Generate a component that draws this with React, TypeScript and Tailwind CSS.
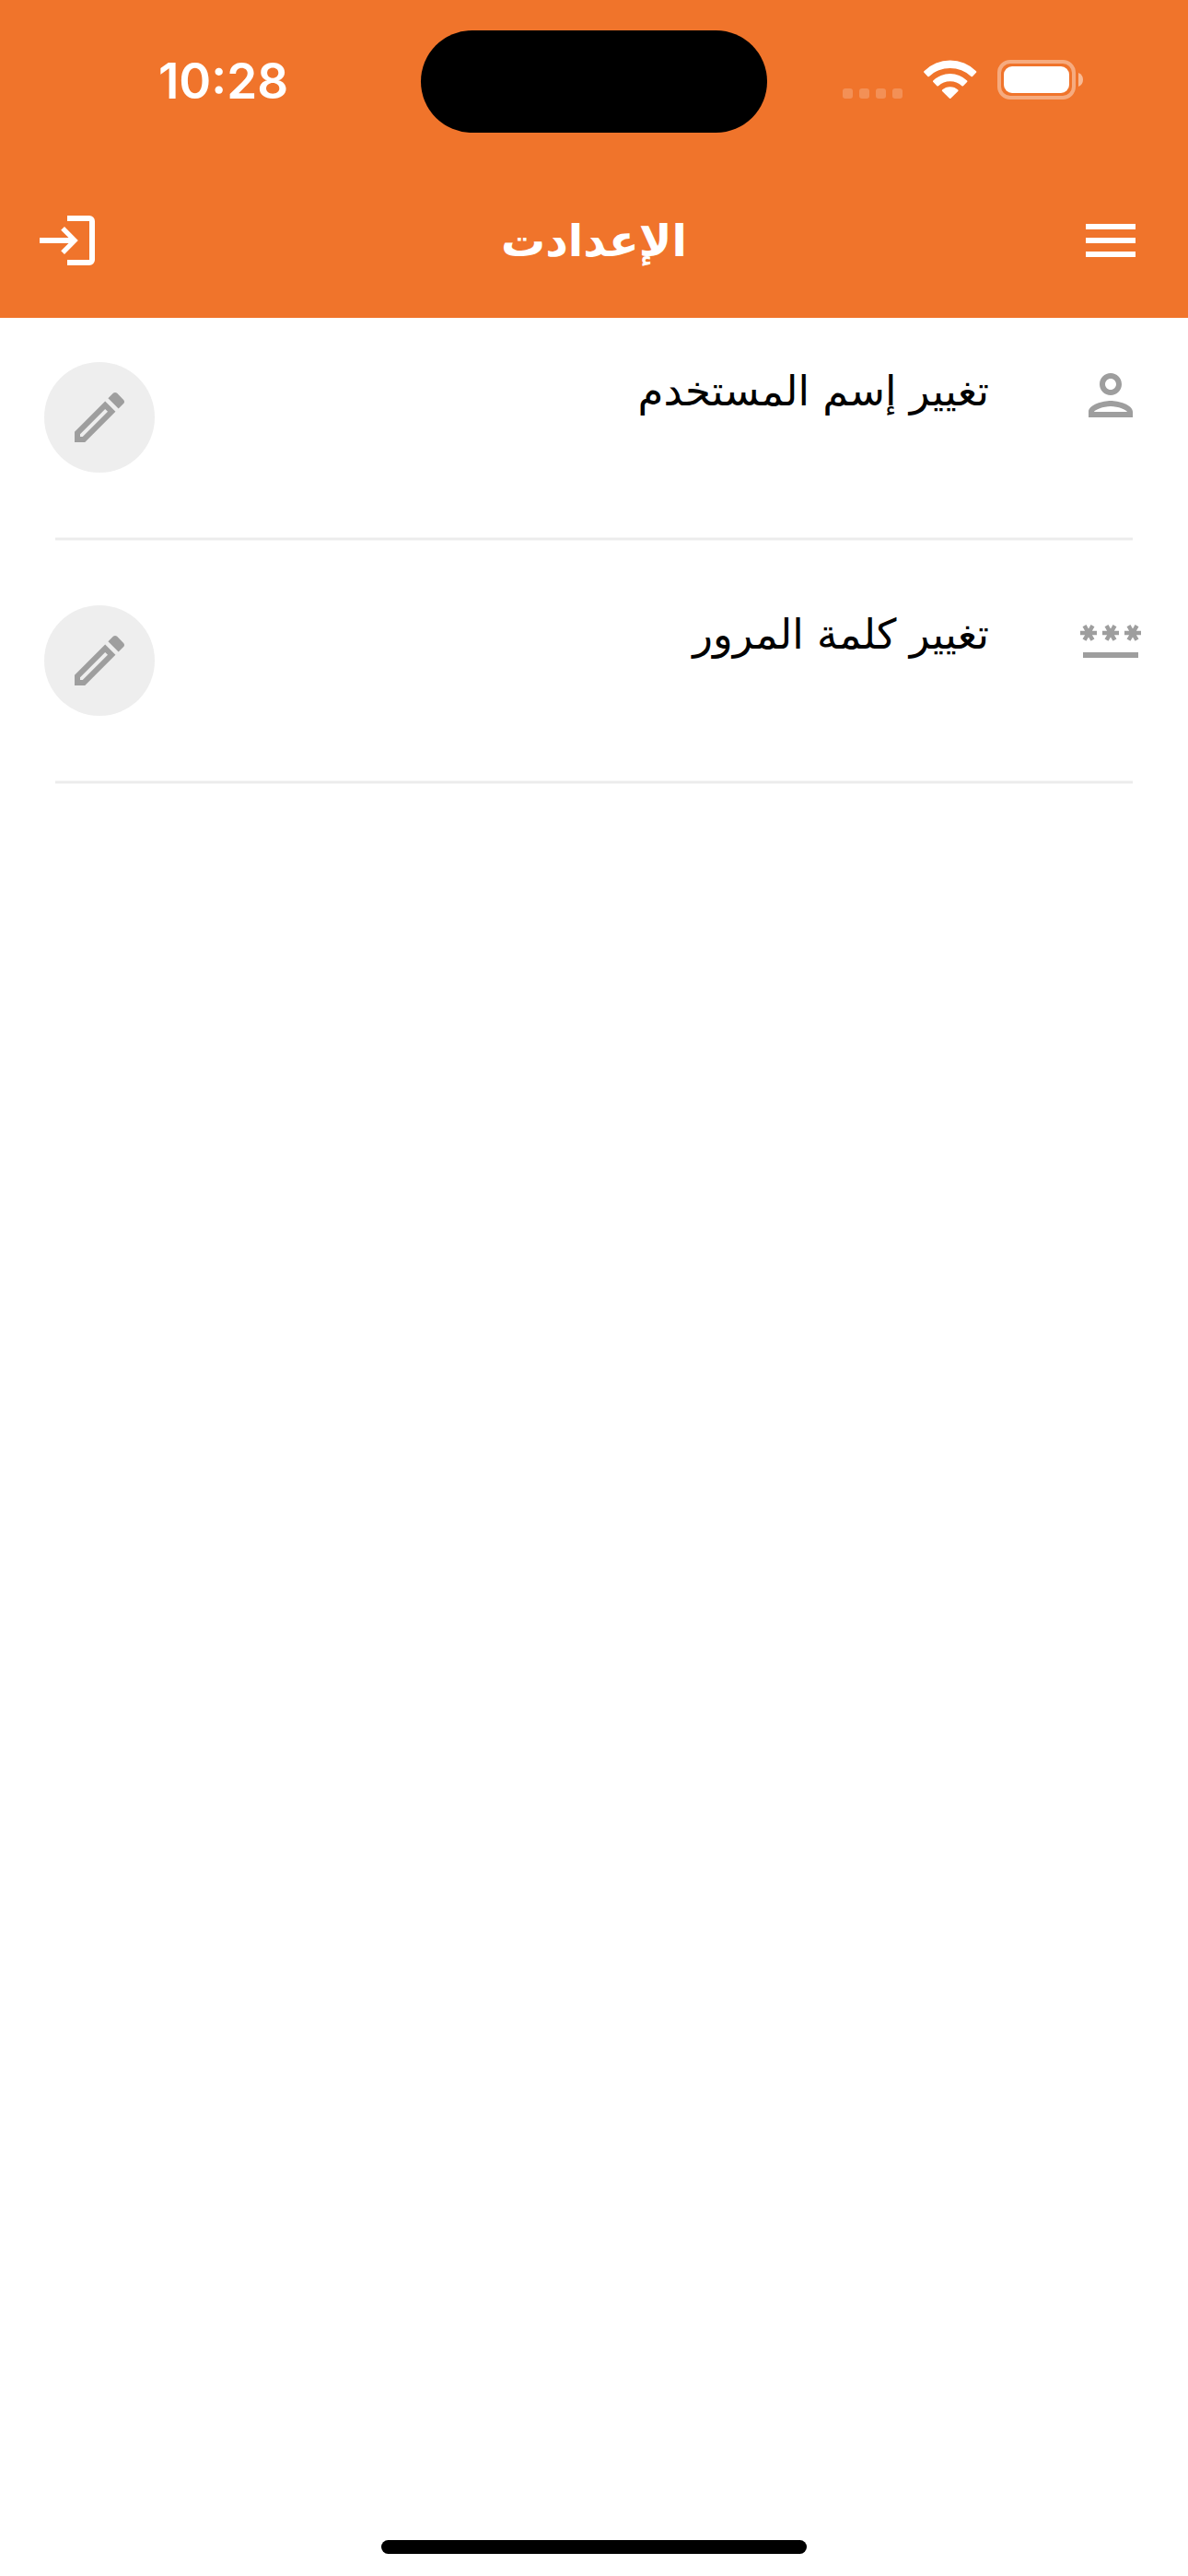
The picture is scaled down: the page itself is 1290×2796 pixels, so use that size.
import type { ReactNode } from "react";
import { MdMenu, MdOutlinePerson, MdPassword } from "react-icons/md";

interface SettingItem {
  id: string;
  label: string;
  icon: ReactNode;
}

const items: SettingItem[] = [
  {
    id: "username",
    label: "تغيير إسم المستخدم",
    icon: <MdOutlinePerson className="size-18" />,
  },
  {
    id: "password",
    label: "تغيير كلمة المرور",
    icon: <MdPassword className="size-18" />,
  },
];

function PencilIcon() {
  return (
    <svg viewBox="0 0 24 24" fill="currentColor" className="size-18" aria-hidden="true">
      <path d="M14.06,9L15,9.94L5.92,19H5V18.08L14.06,9M17.66,3C17.41,3 17.15,3.1 16.96,3.29L15.13,5.12L18.88,8.87L20.71,7.04C21.1,6.65 21.1,6 20.71,5.63L18.37,3.29C18.17,3.09 17.92,3 17.66,3M14.06,6.19L3,17.25V21H6.75L17.81,9.94L14.06,6.19Z" />
    </svg>
  );
}

function LogoutIcon() {
  return (
    <svg viewBox="0 0 72 72" fill="currentColor" className="size-18" aria-hidden="true">
      <path d="M39 9H63a6 6 0 0 1 6 6V57a6 6 0 0 1-6 6H39V57H63V15H39Z" />
      <path d="M9 33H40.5L32.2 24.8L36 21L50.8 36L36 51L32.2 47.2L40.5 39H9Z" />
    </svg>
  );
}

function StatusIcons() {
  return (
    <div className="flex items-center pr-1 pb-1 text-white">
      <svg viewBox="0 0 65 43" fill="currentColor" className="h-[43px] w-[65px] opacity-20">
        <rect x="0" y="31" width="11" height="11" rx="3" />
        <rect x="18" y="31" width="11" height="11" rx="3" />
        <rect x="36" y="31" width="11" height="11" rx="3" />
        <rect x="54" y="31" width="11" height="11" rx="3" />
      </svg>
      <svg viewBox="0 0 58 43" fill="currentColor" className="ml-[23px] h-[43px] w-[58px]">
        <path d="M.4 13.8Q-.2 13 .4 12.3A40 40 0 0 1 57 12.3Q57.6 13 57 13.8L53 17.9Q52.3 18.6 51.5 17.9A33.5 33.5 0 0 0 5.9 17.9Q5.1 18.6 4.4 17.9Z" />
        <path d="M10.3 24Q9.7 23.2 10.3 22.5A26.4 26.4 0 0 1 47.1 22.5Q47.7 23.2 47.1 24L43 28.2Q42.2 28.9 41.4 28.2A19 19 0 0 0 16 28.2Q15.2 28.9 14.4 28.2Z" />
        <path d="M20.1 34Q19.4 33.3 20.1 32.6A12.6 12.6 0 0 1 37.3 32.6Q38 33.3 37.3 34L29.4 41.8Q28.7 42.4 28 41.8Z" />
      </svg>
      <svg viewBox="0 0 93 43" fill="currentColor" className="ml-[22px] h-[43px] w-[93px]">
        <rect
          x="2"
          y="2"
          width="81"
          height="39"
          rx="12"
          fill="none"
          stroke="currentColor"
          strokeWidth="4"
          opacity="0.4"
        />
        <rect x="7" y="7" width="71" height="29" rx="9" />
        <path d="M88 14Q93 16 93 21.5Q93 27 88 29Z" opacity="0.5" />
      </svg>
    </div>
  );
}

export default function App() {
  return (
    <div
      dir="rtl"
      lang="ar"
      className="flex min-h-screen flex-col bg-white font-['DejaVu_Sans',sans-serif]"
    >
      <header className="bg-[#f0742b] text-white">
        {/* Status bar */}
        <div dir="ltr" className="flex h-[177px] items-start pt-[33px]">
          <div className="flex h-[111px] flex-1 items-center justify-center pl-7">
            <time className="font-['Inter',sans-serif] text-[53px] leading-none font-semibold">
              10:28
            </time>
          </div>
          <div className="h-[111px] w-[376px] rounded-full bg-black" />
          <div className="flex h-[111px] flex-1 items-center justify-center pr-7">
            <StatusIcons />
          </div>
        </div>

        {/* App bar */}
        <div className="grid h-[168px] grid-cols-[1fr_auto_1fr] items-center">
          <button type="button" aria-label="القائمة" className="mr-12 justify-self-start">
            <MdMenu className="size-18" />
          </button>
          <h1 className="text-[48px] leading-none font-bold">الإعدادت</h1>
          <button type="button" aria-label="خروج" className="ml-[34px] justify-self-end">
            <LogoutIcon />
          </button>
        </div>
      </header>

      <main className="flex-1 px-12 pt-12">
        <ul>
          {items.map((item) => (
            <li key={item.id}>
              <div className="flex items-start text-[#9e9e9e]">
                {item.icon}
                <span className="flex-1 pr-24 text-[45px] leading-[64px] text-black">
                  {item.label}
                </span>
                <button
                  type="button"
                  aria-label={item.label}
                  className="flex size-30 items-center justify-center rounded-full bg-[#eeeeee]"
                >
                  <PencilIcon />
                </button>
              </div>
              <hr className="mx-3 my-[70px] h-1 border-y border-[#f6f6f6] bg-[#ececec]" />
            </li>
          ))}
        </ul>
      </main>

      {/* Home indicator */}
      <div className="mx-auto mb-6 h-[15px] w-[462px] rounded-full bg-black" />
    </div>
  );
}
